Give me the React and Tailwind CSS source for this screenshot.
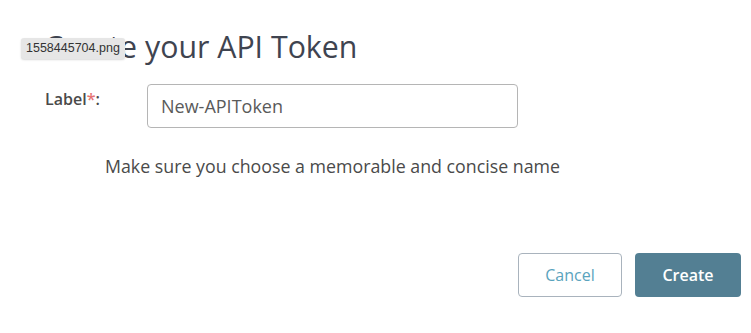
export default function App() {
  return (
    <div className="relative h-[333px] w-[751px] bg-white font-['Open_Sans',sans-serif] text-[#4a4a4a]">
      <h1 className="pl-[44px] pt-[25px] text-[30.3px] leading-[44px] font-normal text-[#3f4450]">
        Create your API Token
      </h1>

      <div className="mt-[15px] flex items-start">
        <label className="w-[147px] shrink-0 pl-[45px] pt-[3px] text-[16px] font-semibold text-[#4a4a4a]">
          Label<span className="text-[#e57373]">*</span>:
        </label>
        <input
          defaultValue="New-APIToken"
          className="h-[44px] w-[371px] rounded-[4px] border border-[#b5b5b5] px-[13px] text-[18px] text-[#5a5a5a] outline-none"
        />
      </div>

      <p className="mt-[24px] pl-[105px] text-[17.8px] leading-[28px] text-[#4a4a4a]">
        Make sure you choose a memorable and concise name
      </p>

      <div className="mt-[73px] flex justify-end gap-[13px] pr-[10px]">
        <button className="h-[44px] w-[104px] rounded-[4px] border border-[#a9b3bd] bg-white text-[16px] text-[#5aa3bd]">
          Cancel
        </button>
        <button className="h-[44px] w-[106px] rounded-[4px] bg-[#537f93] text-[16px] font-semibold text-white">
          Create
        </button>
      </div>

      {/* filename tooltip over the heading */}
      <div className="absolute left-[21px] top-[38px] rounded-[3px] bg-[#e6e6e6] px-[5px] py-[1px] font-['Liberation_Sans',sans-serif] text-[12.5px] text-[#333] shadow-[0_1px_2px_rgba(0,0,0,0.15)]">
        1558445704.png
      </div>
    </div>
  )
}
